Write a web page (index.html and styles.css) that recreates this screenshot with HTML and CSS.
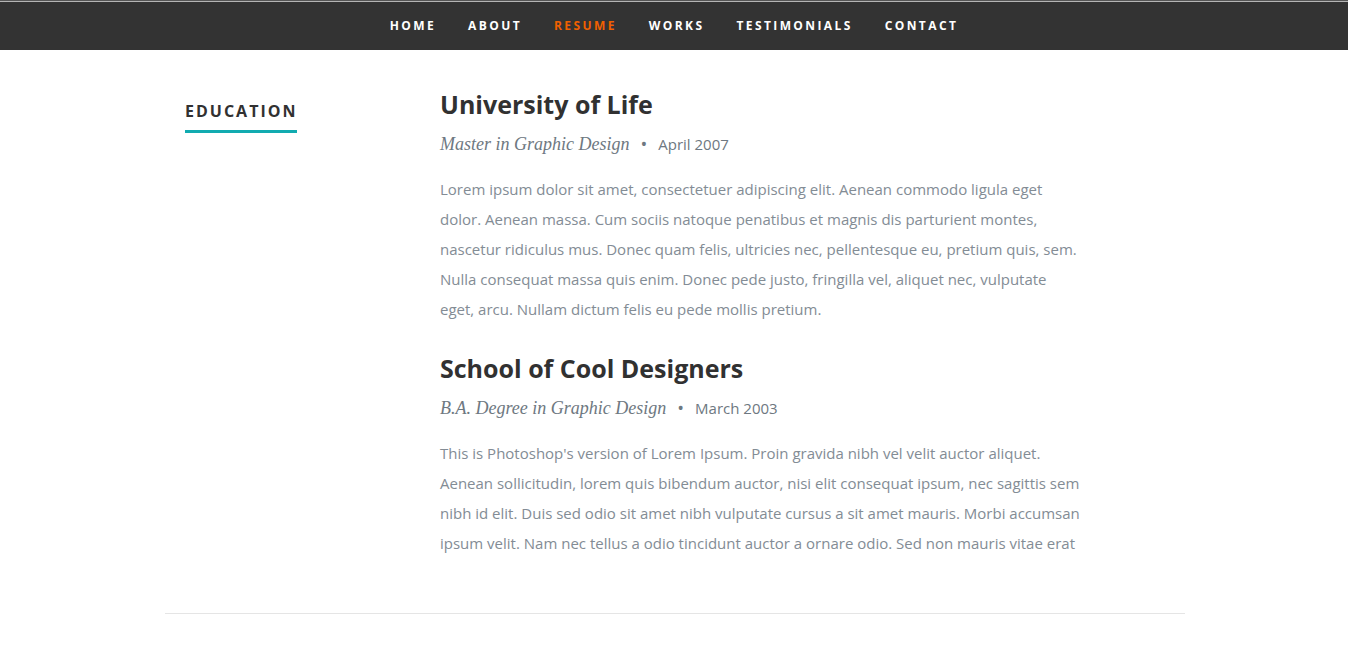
FILE: index.html
```html
<!DOCTYPE html>
<html>
<head>
<meta charset="utf-8">
<link rel="stylesheet" href="styles.css">
</head>
<body>
<nav class="nav">
  <ul class="nav-list">
    <li><a href="#">Home</a></li>
    <li><a href="#">About</a></li>
    <li><a class="current" href="#">Resume</a></li>
    <li><a href="#">Works</a></li>
    <li><a href="#">Testimonials</a></li>
    <li><a href="#">Contact</a></li>
  </ul>
</nav>
<section class="resume">
  <div class="row">
    <div class="side">
      <h2 class="side-title"><span>Education</span></h2>
    </div>
    <div class="main">
      <div class="item">
        <h3 class="item-title">University of Life</h3>
        <p class="info"><em>Master in Graphic Design</em><span class="bullet">&bull;</span><span class="date">April 2007</span></p>
        <p class="text">Lorem ipsum dolor sit amet, consectetuer adipiscing elit. Aenean commodo ligula eget dolor. Aenean massa. Cum sociis natoque penatibus et magnis dis parturient montes, nascetur ridiculus mus. Donec quam felis, ultricies nec, pellentesque eu, pretium quis, sem. Nulla consequat massa quis enim. Donec pede justo, fringilla vel, aliquet nec, vulputate eget, arcu. Nullam dictum felis eu pede mollis pretium.</p>
      </div>
      <div class="item">
        <h3 class="item-title">School of Cool Designers</h3>
        <p class="info"><em>B.A. Degree in Graphic Design</em><span class="bullet">&bull;</span><span class="date">March 2003</span></p>
        <p class="text">This is Photoshop's version of Lorem Ipsum. Proin gravida nibh vel velit auctor aliquet. Aenean sollicitudin, lorem quis bibendum auctor, nisi elit consequat ipsum, nec sagittis sem nibh id elit. Duis sed odio sit amet nibh vulputate cursus a sit amet mauris. Morbi accumsan ipsum velit. Nam nec tellus a odio tincidunt auctor a ornare odio. Sed non mauris vitae erat</p>
      </div>
    </div>
  </div>
  <hr class="divider">
</section>
</body>
</html>
```
FILE: styles.css
```css
* { box-sizing: border-box; }
html, body { margin: 0; padding: 0; background: #fff; }
body { font-family: "Open Sans", "Liberation Sans", sans-serif; padding-left: 2px; }

.nav {
  height: 50px;
  margin-left: -2px;
  background: linear-gradient(#555 0, #555 1px, #b5b5b5 1px, #b5b5b5 2px, #333 2px);
  background-color: #333;
}
.nav-list {
  list-style: none;
  margin: 0;
  padding: 2px 0 0;
  height: 50px;
  display: flex;
  justify-content: center;
  align-items: center;
}
.nav-list li { display: block; }
.nav-list a {
  display: block;
  padding: 0 16px;
  font-weight: 700;
  font-size: 12px;
  letter-spacing: 2.4px;
  text-transform: uppercase;
  color: #fff;
  text-decoration: none;
  line-height: 46px;
}
.nav-list a.current { color: #f06000; }

.resume {
  width: 1020px;
  margin: 0 auto;
  padding-top: 39px;
}
.row { display: flex; }
.side { width: 255px; padding: 0 20px; }
.main { width: 680px; padding: 0 20px; }

.side-title {
  margin: 0;
  padding-top: 10px;
  font-size: 16px;
  font-weight: 700;
  letter-spacing: 2px;
  text-transform: uppercase;
  color: #313131;
  line-height: 24px;
}
.side-title span {
  display: inline-block;
  padding-bottom: 7px;
  border-bottom: 3px solid #11abb0;
}

.item { margin-bottom: 29px; }
.item-title {
  margin: 0;
  font-size: 25px;
  font-weight: 700;
  color: #313131;
  line-height: 30px;
}
.info {
  margin: 13px 0 0;
  font-size: 15px;
  color: #6e7881;
  line-height: 24px;
}
.info em {
  font-family: "Liberation Serif", "DejaVu Serif", serif;
  font-style: italic;
  font-size: 18px;
  color: #6e7881;
}
.bullet { margin: 0 11px 0 11px; font-size: 18px; color: #6e7881; vertical-align: -1px; }
.date { font-size: 15px; color: #6e7881; }

.text {
  margin: 18px 0 0;
  font-size: 15px;
  line-height: 30px;
  color: #838c95;
}

.divider {
  border: 0;
  border-top: 1px solid #e5e5e5;
  margin: 26px 0 0;
}
```
